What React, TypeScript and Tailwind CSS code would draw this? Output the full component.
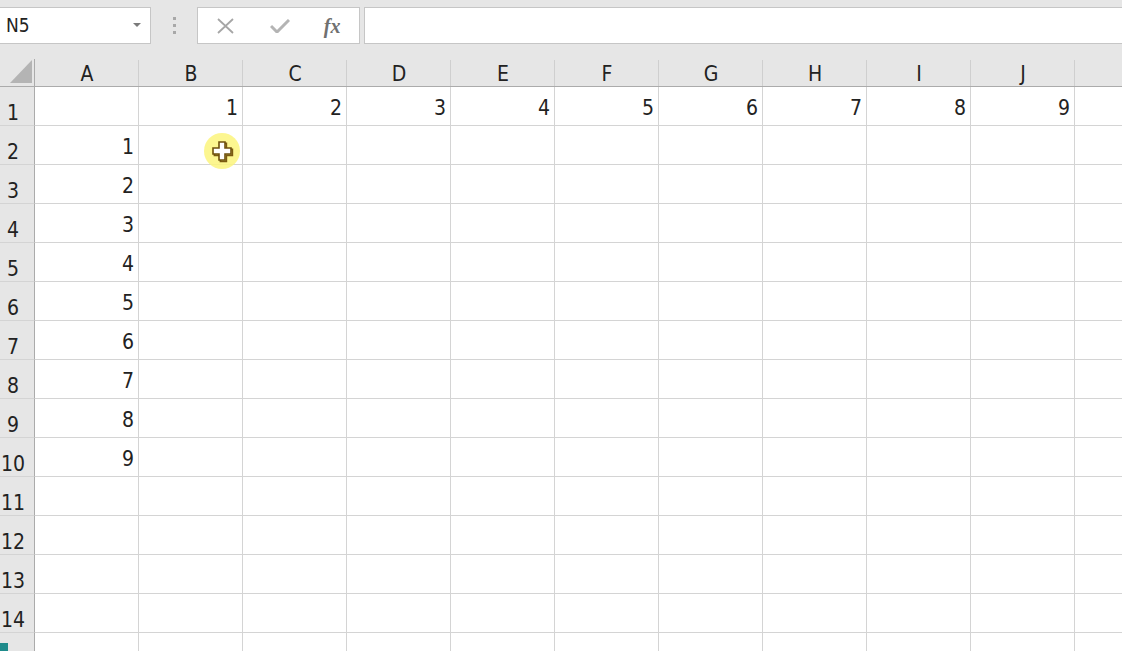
const columns = ['A', 'B', 'C', 'D', 'E', 'F', 'G', 'H', 'I', 'J'];
const rowCount = 14;

// sheet values keyed by "row-col"
const values: Record<string, string> = {};
for (let i = 1; i <= 9; i++) {
  values[`1-${i + 1}`] = String(i);
  values[`${i + 1}-1`] = String(i);
}

const font = { fontFamily: '"DejaVu Sans Condensed", "Noto Sans CJK SC", sans-serif' };

function CellCursor() {
  return (
    <div className="absolute left-[65px] top-[7px] w-[36px] h-[36px] rounded-full bg-[#fbf57c]/85 flex items-center justify-center pointer-events-none">
      <svg width="22" height="22" viewBox="0 0 22 22" className="ml-[1px] mt-[1px]">
        <path d="M7 1H13V7H19V13H13V19H7V13H1V7H7Z" fill="none" stroke="#7a5a10" strokeWidth="1.6" transform="translate(1.4 1.4)" />
        <path d="M7 1H13V7H19V13H13V19H7V13H1V7H7Z" fill="#ffffff" stroke="#6e500c" strokeWidth="1.6" />
      </svg>
    </div>
  );
}

function FormulaBar() {
  return (
    <div className="h-[59px] bg-[#e6e6e6] flex items-start pt-[7px] shrink-0">
      <div className="w-[151px] h-[37px] bg-white border border-[#c6c6c6] border-l-0 flex items-center justify-between pl-[6px] pr-[9px]">
        <span className="text-[19px] text-[#222]" style={font}>N5</span>
        <svg width="8" height="5" viewBox="0 0 8 5"><path d="M0 0H8L4 4Z" fill="#7a7a7a" /></svg>
      </div>
      <div className="w-[46px] h-[37px] flex flex-col items-center justify-center gap-[4px]">
        <span className="w-[3px] h-[3px] bg-[#a8a8a8]" />
        <span className="w-[3px] h-[3px] bg-[#a8a8a8]" />
        <span className="w-[3px] h-[3px] bg-[#a8a8a8]" />
      </div>
      <div className="w-[163px] h-[37px] bg-white border border-[#c6c6c6] flex items-center">
        <div className="w-[54px] flex justify-center pl-[2px]">
          <svg width="17" height="16" viewBox="0 0 17 16"><path d="M1 1L16 15M16 1L1 15" stroke="#a6a6a6" strokeWidth="1.8" /></svg>
        </div>
        <div className="w-[54px] flex justify-center pl-[2px]">
          <svg width="20" height="14" viewBox="0 0 20 14"><path d="M1 7L7 13L19 1" stroke="#b4b4b4" strokeWidth="3" fill="none" /></svg>
        </div>
        <div className="w-[54px] flex justify-center">
          <span className="text-[20px] italic font-bold text-[#707070] leading-none" style={{ fontFamily: '"Liberation Serif", serif' }}>
            fx
          </span>
        </div>
      </div>
      <div className="flex-1 ml-[4px] h-[37px] bg-white border border-[#c6c6c6] border-r-0" />
    </div>
  );
}

export default function App() {
  return (
    <div className="w-[1122px] h-[651px] overflow-hidden bg-white flex flex-col relative" style={font}>
      <FormulaBar />
      <div className="grid grid-cols-[35px_repeat(10,104px)_1fr] grid-rows-[28px_repeat(14,39px)_1fr] flex-1">
        {/* corner */}
        <div className="bg-[#e6e6e6] border-r border-b border-[#ababab] flex items-end justify-end pr-[2px] pb-[3px]">
          <svg width="22" height="23" viewBox="0 0 22 23"><path d="M22 0V23H0Z" fill="#b4b4b4" /></svg>
        </div>
        {columns.map((c) => (
          <div key={c} className="bg-[#e6e6e6] border-b border-[#ababab] flex items-end justify-center relative">
            <span className="absolute right-0 bottom-0 top-[1px] w-px bg-[#cfcfcf]" />
            <span className="text-[21px] leading-[24px] text-[#222]">{c}</span>
          </div>
        ))}
        <div className="bg-[#e6e6e6] border-b border-[#ababab]" />

        {Array.from({ length: rowCount }, (_, r) => r + 1).map((r) => (
          <div key={r} className="contents">
            <div className="bg-[#e6e6e6] border-r border-b border-r-[#ababab] border-b-[#d4d4d4] flex items-end">
              <span className="w-[26px] text-center text-[21px] leading-[24px] text-[#222]">{r}</span>
            </div>
            {columns.map((c, ci) => (
              <div key={c} className="border-r border-b border-[#d4d4d4] flex items-end justify-end pr-[4px] pb-[5px] relative">
                <span className="text-[21px] leading-[24px] text-[#222]">{values[`${r}-${ci + 1}`] ?? ''}</span>
                {r === 2 && ci === 1 && <CellCursor />}
              </div>
            ))}
            <div className="border-b border-[#d4d4d4]" />
          </div>
        ))}

        <div className="bg-[#e6e6e6] border-r border-[#ababab] relative">
          <span className="absolute left-0 bottom-0 w-[8px] h-[8px] bg-[#1f8b8b]" />
        </div>
        {columns.map((c) => (
          <div key={c} className="border-r border-[#d4d4d4]" />
        ))}
        <div />
      </div>
    </div>
  );
}
